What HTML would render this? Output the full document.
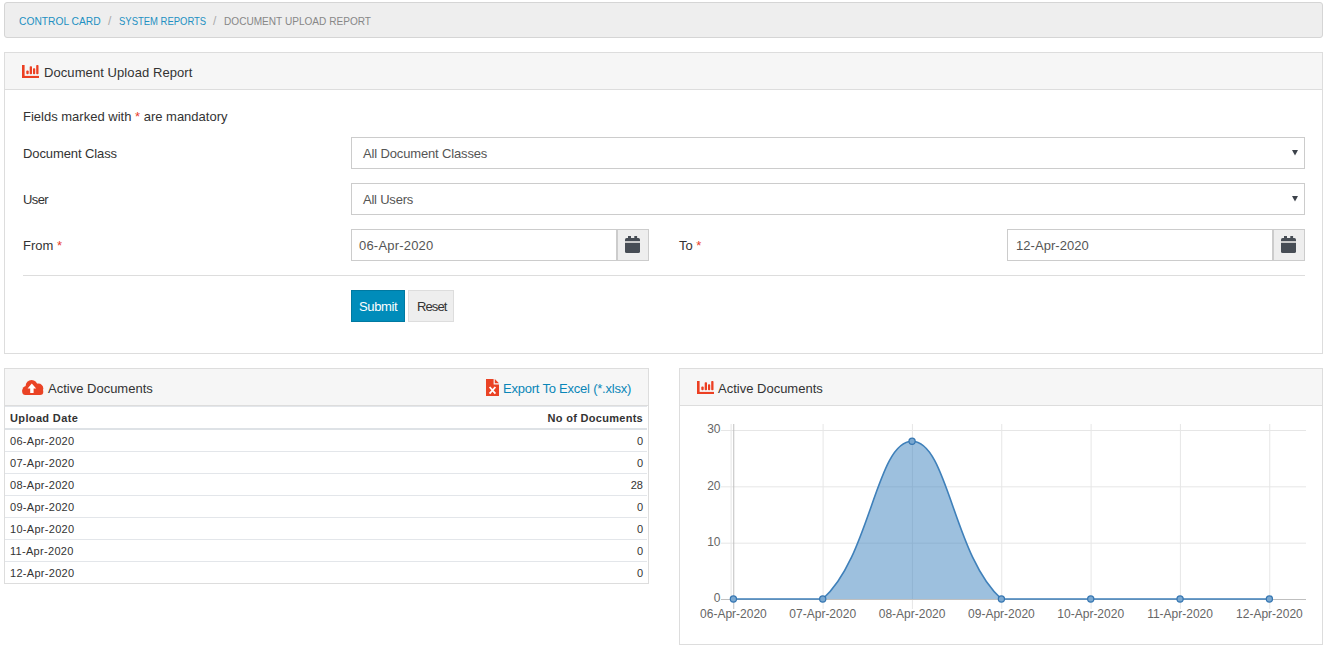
<!DOCTYPE html>
<html>
<head>
<meta charset="utf-8">
<style>
html,body{margin:0;padding:0;background:#fff;}
body{width:1327px;height:659px;position:relative;overflow:hidden;font-family:"Liberation Sans",sans-serif;color:#333;}
.a{position:absolute;white-space:nowrap;line-height:1;}
.box{position:absolute;box-sizing:border-box;}
.crumbs{left:4px;top:2px;width:1319px;height:36px;background:#eeeeee;border:1px solid #d5d5d5;border-radius:3px;}
.panel{border:1px solid #dddddd;background:#fff;}
.phead{position:absolute;left:0;top:0;right:0;background:#f6f6f6;border-bottom:1px solid #dddddd;}
.inp{border:1px solid #cccccc;background:#fff;}
.cal{border:1px solid #cccccc;background:#eeeeee;}
.lnk{color:#0a86b8;}
.red{color:#e9402b;}
tr,td{padding:0;}
</style>
</head>
<body>

<!-- breadcrumb -->
<div class="box crumbs"></div>
<div class="a lnk" id="bc1" style="color:#2290c2;transform-origin:0 0;transform:scaleX(0.932);left:19px;top:16px;font-size:11px;">CONTROL CARD</div>
<div class="a" style="left:108px;top:15px;font-size:12px;color:#aaa;">/</div>
<div class="a lnk" id="bc2" style="color:#2290c2;transform-origin:0 0;transform:scaleX(0.861);left:119px;top:16px;font-size:11px;">SYSTEM REPORTS</div>
<div class="a" style="left:213px;top:15px;font-size:12px;color:#aaa;">/</div>
<div class="a" id="bc3" style="transform-origin:0 0;transform:scaleX(0.917);left:224px;top:16px;font-size:11px;color:#878787;">DOCUMENT UPLOAD REPORT</div>

<!-- main panel -->
<div class="box panel" style="left:4px;top:52px;width:1319px;height:302px;">
  <div class="phead" style="height:36px;"></div>
</div>
<div class="a" id="t_dur" style="letter-spacing:0.08px;left:44px;top:66px;font-size:13px;color:#333;">Document Upload Report</div>

<div class="a" id="t_fields" style="left:23px;top:110px;font-size:13px;">Fields marked with <span class="red">*</span> are mandatory</div>
<div class="a" id="t_dc" style="letter-spacing:-0.1px;left:23px;top:147px;font-size:13px;">Document Class</div>
<div class="a" style="letter-spacing:-0.6px;left:23px;top:193px;font-size:13px;">User</div>
<div class="a" style="left:23px;top:239px;font-size:13px;">From <span class="red">*</span></div>

<div class="box inp" style="left:351px;top:137px;width:954px;height:32px;"></div>
<div class="a" id="t_adc" style="letter-spacing:-0.15px;left:363px;top:147px;font-size:13px;color:#555;">All Document Classes</div>
<div class="box inp" style="left:351px;top:183px;width:954px;height:32px;"></div>
<div class="a" style="letter-spacing:-0.22px;left:363px;top:193px;font-size:13px;color:#555;">All Users</div>

<div class="box inp" style="left:351px;top:229px;width:266px;height:32px;"></div>
<div class="box cal" style="left:617px;top:229px;width:32px;height:32px;"></div>
<div class="a" id="t_d1" style="letter-spacing:0.2px;left:359px;top:239px;font-size:13px;color:#555;">06-Apr-2020</div>
<div class="a" style="left:679px;top:239px;font-size:13px;">To <span class="red">*</span></div>
<div class="box inp" style="left:1007px;top:229px;width:266px;height:32px;"></div>
<div class="box cal" style="left:1273px;top:229px;width:32px;height:32px;"></div>
<div class="a" style="letter-spacing:0.05px;left:1016px;top:239px;font-size:13px;color:#555;">12-Apr-2020</div>

<div class="box" style="left:23px;top:275px;width:1282px;height:1px;background:#dddddd;"></div>

<div class="box" style="left:351px;top:290px;width:54px;height:32px;background:#008cba;border:1px solid #0079a1;"></div>
<div class="a" id="t_sub" style="letter-spacing:-0.35px;left:359px;top:300px;font-size:13px;color:#fff;">Submit</div>
<div class="box" style="left:408px;top:290px;width:46px;height:32px;background:#eeeeee;border:1px solid #dddddd;"></div>
<div class="a" style="letter-spacing:-0.9px;left:417px;top:300px;font-size:13px;color:#333;">Reset</div>

<!-- table panel -->
<div class="box panel" style="left:4px;top:368px;width:645px;height:216px;">
  <div class="phead" style="height:36px;"></div>
</div>
<div class="a" id="t_ad1" style="left:48px;top:382px;font-size:13px;">Active Documents</div>
<div class="a lnk" id="t_exp" style="letter-spacing:-0.22px;left:503px;top:382px;font-size:13px;">Export To Excel (*.xlsx)</div>

<div class="box" style="left:5px;top:406px;width:642px;height:1px;background:#e3e6ea;"></div>
<div class="a" id="t_ud" style="letter-spacing:0.36px;left:10px;top:413px;font-size:11px;font-weight:bold;">Upload Date</div>
<div class="a" id="t_nod" style="letter-spacing:0.29px;left:5px;width:638px;text-align:right;top:413px;font-size:11px;font-weight:bold;">No of Documents</div>
<div class="box" style="left:5px;top:428px;width:642px;height:2px;background:#dee2e6;"></div>

<div class="a" style="letter-spacing:0.3px;left:10px;top:436px;font-size:11px;">06-Apr-2020</div>
<div class="a" style="left:5px;width:638px;text-align:right;top:436px;font-size:11px;">0</div>
<div class="box" style="left:5px;top:451px;width:642px;height:1px;background:#e3e6ea;"></div>
<div class="a" style="letter-spacing:0.3px;left:10px;top:458px;font-size:11px;">07-Apr-2020</div>
<div class="a" style="left:5px;width:638px;text-align:right;top:458px;font-size:11px;">0</div>
<div class="box" style="left:5px;top:473px;width:642px;height:1px;background:#e3e6ea;"></div>
<div class="a" style="letter-spacing:0.3px;left:10px;top:480px;font-size:11px;">08-Apr-2020</div>
<div class="a" style="left:5px;width:638px;text-align:right;top:480px;font-size:11px;">28</div>
<div class="box" style="left:5px;top:495px;width:642px;height:1px;background:#e3e6ea;"></div>
<div class="a" style="letter-spacing:0.3px;left:10px;top:502px;font-size:11px;">09-Apr-2020</div>
<div class="a" style="left:5px;width:638px;text-align:right;top:502px;font-size:11px;">0</div>
<div class="box" style="left:5px;top:517px;width:642px;height:1px;background:#e3e6ea;"></div>
<div class="a" style="letter-spacing:0.3px;left:10px;top:524px;font-size:11px;">10-Apr-2020</div>
<div class="a" style="left:5px;width:638px;text-align:right;top:524px;font-size:11px;">0</div>
<div class="box" style="left:5px;top:539px;width:642px;height:1px;background:#e3e6ea;"></div>
<div class="a" style="letter-spacing:0.3px;left:10px;top:546px;font-size:11px;">11-Apr-2020</div>
<div class="a" style="left:5px;width:638px;text-align:right;top:546px;font-size:11px;">0</div>
<div class="box" style="left:5px;top:561px;width:642px;height:1px;background:#e3e6ea;"></div>
<div class="a" style="letter-spacing:0.3px;left:10px;top:568px;font-size:11px;">12-Apr-2020</div>
<div class="a" style="left:5px;width:638px;text-align:right;top:568px;font-size:11px;">0</div>

<!-- chart panel -->
<div class="box panel" style="left:679px;top:368px;width:644px;height:277px;">
  <div class="phead" style="height:36px;"></div>
</div>
<div class="a" id="t_ad2" style="left:718px;top:382px;font-size:13px;">Active Documents</div>

<!--ICONS-->
<svg style="position:absolute;left:0;top:0" width="1327" height="659" viewBox="0 0 1327 659">
<defs>
<g id="barico">
  <rect x="0" y="0" width="2.6" height="13" fill="#ec3f22"/>
  <rect x="0" y="10.9" width="17" height="2.1" fill="#ec3f22"/>
  <rect x="4.3" y="5.4" width="2.4" height="3.8" rx="1" fill="#ec3f22"/>
  <rect x="7.7" y="1.2" width="2.3" height="8" rx="0.8" fill="#ec3f22"/>
  <rect x="11" y="3.2" width="2.2" height="6" rx="0.8" fill="#ec3f22"/>
  <rect x="14.2" y="0" width="2.3" height="9.2" rx="0.8" fill="#ec3f22"/>
</g>
<g id="calico">
  <rect x="0" y="2" width="15" height="15" rx="1.6" fill="#474d55"/>
  <rect x="0" y="5" width="15" height="2" fill="#c9c9c9"/>
  <rect x="3" y="0" width="3" height="2.5" fill="#474d55"/>
  <rect x="9.3" y="0" width="2.8" height="2.5" fill="#474d55"/>
</g>
</defs>
<use href="#barico" x="22" y="65"/>
<use href="#barico" x="697" y="381"/>
<use href="#calico" x="625" y="236"/>
<use href="#calico" x="1281" y="236"/>
<polygon points="1292,150 1298,150 1295,155.5" fill="#3d434b"/>
<polygon points="1292,196 1298,196 1295,201.5" fill="#3d434b"/>
<!-- cloud upload -->
<g fill="#ea4325">
  <circle cx="26.6" cy="390.4" r="4.3"/>
  <circle cx="31.6" cy="386" r="6"/>
  <circle cx="38.3" cy="388.6" r="5"/>
  <rect x="22.3" y="388.5" width="21" height="6.5" rx="3.2"/>
</g>
<polygon points="31.8,383.6 36.2,388.6 33.6,388.6 33.6,393 30.2,393 30.2,388.6 27.6,388.6" fill="#fff"/>
<!-- excel file -->
<path d="M486,379 H493.6 V384.4 H499 V396 H486 Z" fill="#ea4325"/>
<path d="M494.8,379 L499,383.2 H494.8 Z" fill="#ea4325"/>
<path d="M489.6,387 L495.4,393.6 M495.4,387 L489.6,393.6" stroke="#fff" stroke-width="1.8"/>
</svg>

<!--/ICONS-->
<!--CHART-->
<svg style="position:absolute;left:0;top:0" width="1327" height="659" viewBox="0 0 1327 659">
<line x1="731.1" y1="424" x2="731.1" y2="599" stroke="#e6e6e6" stroke-width="1"/>
<line x1="721" y1="430.50" x2="1306" y2="430.50" stroke="#e6e6e6" stroke-width="1"/>
<line x1="721" y1="486.83" x2="1306" y2="486.83" stroke="#e6e6e6" stroke-width="1"/>
<line x1="721" y1="543.17" x2="1306" y2="543.17" stroke="#e6e6e6" stroke-width="1"/>
<line x1="733.75" y1="424" x2="733.75" y2="609" stroke="#bfbfbf" stroke-width="1"/>
<line x1="823.08" y1="424" x2="823.08" y2="609" stroke="#e6e6e6" stroke-width="1"/>
<line x1="912.42" y1="424" x2="912.42" y2="609" stroke="#e6e6e6" stroke-width="1"/>
<line x1="1001.75" y1="424" x2="1001.75" y2="609" stroke="#e6e6e6" stroke-width="1"/>
<line x1="1091.08" y1="424" x2="1091.08" y2="609" stroke="#e6e6e6" stroke-width="1"/>
<line x1="1180.41" y1="424" x2="1180.41" y2="609" stroke="#e6e6e6" stroke-width="1"/>
<line x1="1269.75" y1="424" x2="1269.75" y2="609" stroke="#e6e6e6" stroke-width="1"/>
<line x1="721" y1="599.5" x2="1306" y2="599.5" stroke="#bfbfbf" stroke-width="1"/>
<path d="M733.40,599.00 C769.13,599.00 799.14,599.00 822.73,599.00 C870.61,556.74 876.33,441.27 912.07,441.27 C947.80,441.27 953.53,556.74 1001.40,599.00 C1024.99,599.00 1055.00,599.00 1090.73,599.00 C1126.47,599.00 1144.33,599.00 1180.07,599.00 C1215.80,599.00 1233.66,599.00 1269.40,599.00 L1269.40,599.0 L733.40,599.0 Z" fill="rgba(60,130,190,0.5)" stroke="none"/>
<path d="M733.40,599.00 C769.13,599.00 799.14,599.00 822.73,599.00 C870.61,556.74 876.33,441.27 912.07,441.27 C947.80,441.27 953.53,556.74 1001.40,599.00 C1024.99,599.00 1055.00,599.00 1090.73,599.00 C1126.47,599.00 1144.33,599.00 1180.07,599.00 C1215.80,599.00 1233.66,599.00 1269.40,599.00" fill="none" stroke="#3f80ba" stroke-width="1.6"/>
<circle cx="733.40" cy="599.00" r="3.1" fill="#7aa8d0" stroke="#3576b2" stroke-width="1.2"/>
<circle cx="822.73" cy="599.00" r="3.1" fill="#7aa8d0" stroke="#3576b2" stroke-width="1.2"/>
<circle cx="912.07" cy="441.27" r="3.1" fill="#7aa8d0" stroke="#3576b2" stroke-width="1.2"/>
<circle cx="1001.40" cy="599.00" r="3.1" fill="#7aa8d0" stroke="#3576b2" stroke-width="1.2"/>
<circle cx="1090.73" cy="599.00" r="3.1" fill="#7aa8d0" stroke="#3576b2" stroke-width="1.2"/>
<circle cx="1180.07" cy="599.00" r="3.1" fill="#7aa8d0" stroke="#3576b2" stroke-width="1.2"/>
<circle cx="1269.40" cy="599.00" r="3.1" fill="#7aa8d0" stroke="#3576b2" stroke-width="1.2"/>
<text x="720.5" y="433.3" text-anchor="end" font-family="Liberation Sans" font-size="12" fill="#666">30</text>
<text x="720.5" y="489.6" text-anchor="end" font-family="Liberation Sans" font-size="12" fill="#666">20</text>
<text x="720.5" y="546.0" text-anchor="end" font-family="Liberation Sans" font-size="12" fill="#666">10</text>
<text x="720.5" y="602.3" text-anchor="end" font-family="Liberation Sans" font-size="12" fill="#666">0</text>
<text x="733.40" y="617.8" text-anchor="middle" font-family="Liberation Sans" font-size="12" fill="#666">06-Apr-2020</text>
<text x="822.73" y="617.8" text-anchor="middle" font-family="Liberation Sans" font-size="12" fill="#666">07-Apr-2020</text>
<text x="912.07" y="617.8" text-anchor="middle" font-family="Liberation Sans" font-size="12" fill="#666">08-Apr-2020</text>
<text x="1001.40" y="617.8" text-anchor="middle" font-family="Liberation Sans" font-size="12" fill="#666">09-Apr-2020</text>
<text x="1090.73" y="617.8" text-anchor="middle" font-family="Liberation Sans" font-size="12" fill="#666">10-Apr-2020</text>
<text x="1180.07" y="617.8" text-anchor="middle" font-family="Liberation Sans" font-size="12" fill="#666">11-Apr-2020</text>
<text x="1269.40" y="617.8" text-anchor="middle" font-family="Liberation Sans" font-size="12" fill="#666">12-Apr-2020</text>
</svg>
<!--/CHART-->
</body>
</html>
